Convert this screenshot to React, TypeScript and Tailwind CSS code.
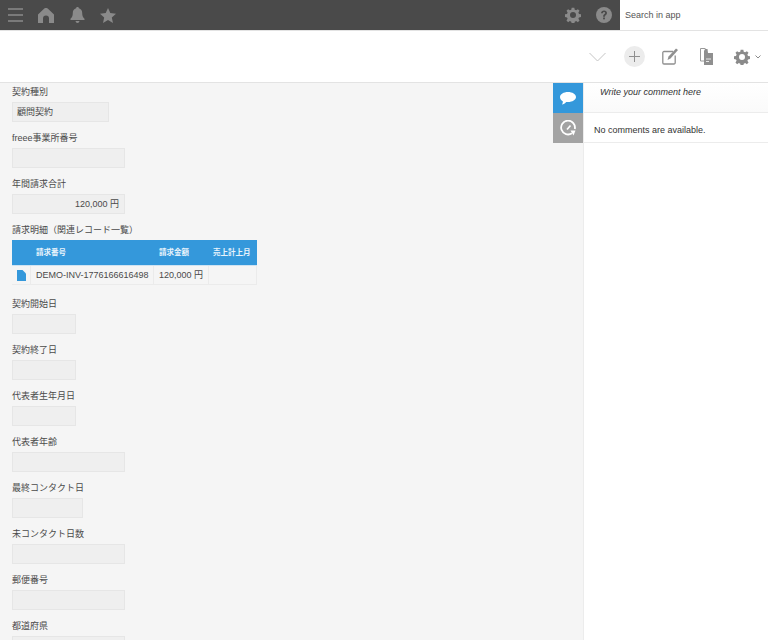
// App.tsx
import React from 'react';

interface Field {
    label: string;
    width: string;
    value?: string;
    right?: boolean;
}

const Gear = ({ size, color }: { size: number; color: string }) => (
    <svg width={size} height={size} viewBox="0 0 24 24" fill={color}>
        <path fillRule="evenodd" d="M10 1h4l.6 3 2.200.9 2.500-1.700 2.500 2.500-1.700 2.500.9 2.200 3 .6v4l-3 .6-.9 2.200 1.700 2.500-2.500 2.500-2.500-1.700-2.200.9-.6 3h-4l-.6-3-2.200-.9-2.500 1.700-2.500-2.500 1.700-2.500-.9-2.200-3-.6v-4l3-.6.9-2.200-1.700-2.500 2.500-2.500 2.500 1.700 2.200-.9.6-3zm2 6.500a4.500 4.500 0 1 0 0 9 4.500 4.500 0 0 0 0-9z" />
    </svg>
);

const fieldsTop: Field[] = [
    { label: '契約種別', width: 'w-[97px]', value: '顧問契約' },
    { label: 'freee事業所番号', width: 'w-[113px]' },
    { label: '年間請求合計', width: 'w-[113px]', value: '120,000 円', right: true },
];

const fieldsBottom: Field[] = [
    { label: '契約開始日', width: 'w-[64px]' },
    { label: '契約終了日', width: 'w-[64px]' },
    { label: '代表者生年月日', width: 'w-[64px]' },
    { label: '代表者年齢', width: 'w-[113px]' },
    { label: '最終コンタクト日', width: 'w-[71px]' },
    { label: '未コンタクト日数', width: 'w-[113px]' },
    { label: '郵便番号', width: 'w-[113px]' },
    { label: '都道府県', width: 'w-[113px]' },
];

const FieldRow = ({ field }: { field: Field }) => (
    <div className="h-[46px] shrink-0">
        <div className="h-[19px] text-[9px] leading-[19px] text-[#4a4a4a]">{field.label}</div>
        <div
            className={`${field.width} h-[20px] bg-[#efefef] border border-[#e6e6e6] text-[9px] leading-[18px] text-[#4a4a4a] ${
                field.right ? 'text-right pr-[5px]' : 'pl-[4px]'
            }`}
        >
            {field.value}
        </div>
    </div>
);

export default function App() {
    return (
        <div
            className="w-[768px] h-[640px] overflow-hidden flex flex-col bg-white"
            style={{ fontFamily: '"Liberation Sans", "Noto Sans CJK JP", sans-serif' }}
        >
            {/* barra superior */}
            <div className="h-[31px] shrink-0 flex bg-[#4a4a4a] border-b border-[#e3e3e3]">
                <div className="flex-1 flex items-center">
                    <svg width="15" height="14" viewBox="0 0 15 14" className="ml-[8px]" stroke="#8a8a8a" strokeWidth="1.300">
                        <path d="M0 1h15M0 7h15M0 13h15" />
                    </svg>
                    <svg width="16" height="15" viewBox="0 0 16 15" className="ml-[15px]" fill="#8a8a8a">
                        <path d="M8 0c1 0 1.800.6 2.500 1.200L16 6.500V15h-5V10.500a3 3 0 0 0-6 0V15H0V6.500l5.500-5.300C6.200.6 7 0 8 0z" />
                    </svg>
                    <svg width="15" height="16" viewBox="0 0 15 16" className="ml-[16px]" fill="#8a8a8a">
                        <path d="M7.500 0c.8 0 1.300.5 1.400 1.200 2.200.6 3.300 2.400 3.300 4.800 0 3 .8 4.400 2.300 5.700V13H.5v-1.300C2 10.400 2.800 9 2.800 6c0-2.400 1.100-4.200 3.300-4.800C6.200.5 6.700 0 7.500 0zM5.500 14h4c-.2 1.200-1 2-2 2s-1.800-.8-2-2z" />
                    </svg>
                    <svg width="16" height="15" viewBox="0 0 16 15" className="ml-[15px]" fill="#8a8a8a">
                        <path d="M8 0l2.300 5.100 5.700.6-4.200 3.700L13 15 8 12.100 3 15l1.200-5.600L0 5.700l5.700-.6z" />
                    </svg>
                </div>
                <div className="flex items-center">
                    <Gear size={16} color="#8a8a8a" />
                    <svg width="16" height="16" viewBox="0 0 16 16" className="ml-[15px] mr-[8px]">
                        <circle cx="8" cy="8" r="8" fill="#8a8a8a" />
                        <path d="M5 6.200C5.100 4.400 6.500 3.500 8 3.500c1.800 0 3 1 3 2.500 0 2.100-2.100 2-2.100 3.700H7.100c0-2.500 2-2.500 2-3.600 0-.6-.5-1-1.100-1-.7 0-1.100.4-1.200 1.100z" fill="#4a4a4a" />
                        <rect x="7.100" y="10.500" width="1.800" height="1.800" fill="#4a4a4a" />
                    </svg>
                </div>
                <div className="w-[148px] bg-white flex items-center pl-[5px] pt-[1px] text-[9px] text-[#555]">
                    Search in app
                </div>
            </div>

            {/* barra de ações */}
            <div className="h-[52px] shrink-0 flex items-center justify-end border-b border-[#e3e3e3] bg-white">
                <svg width="17" height="10" viewBox="0 0 17 10" fill="none" stroke="#c4c4c4" strokeWidth="1">
                    <path d="M.5 1l8 8 8-8" />
                </svg>
                <div className="ml-[18px] w-[21px] h-[21px] rounded-full bg-[#ececec] flex items-center justify-center">
                    <svg width="11" height="11" viewBox="0 0 11 11" stroke="#8f8f8f" strokeWidth="1">
                        <path d="M5.500 0v11M0 5.500h11" />
                    </svg>
                </div>
                <svg width="16" height="17" viewBox="0 0 16 17" className="ml-[17px]" fill="none">
                    <path d="M11 3.500H2a1.200 1.200 0 0 0-1.200 1.200v10.100A1.200 1.200 0 0 0 2 16h10a1.200 1.200 0 0 0 1.200-1.200V7.500" stroke="#8f8f8f" strokeWidth="1.300" />
                    <path d="M14 .5L16 2 8.500 10.500 5.500 12 6.500 8.500z" fill="#8f8f8f" />
                </svg>
                <svg width="13" height="17" viewBox="0 0 13 17" className="ml-[22px]" fill="none">
                    <path d="M5.500 .5H.5V13H4" stroke="#9a9a9a" />
                    <path d="M5 1h2.500l.5 4h5v12H4V3z" fill="#8f8f8f" />
                    <path d="M6 11h5M6 13.500h3" stroke="#fff" strokeWidth="0.800" />
                </svg>
                <div className="ml-[21px] flex">
                    <Gear size={16} color="#8a8a8a" />
                </div>
                <svg width="6" height="4" viewBox="0 0 6 4" className="ml-[5px] mr-[7px]" fill="none" stroke="#8a8a8a">
                    <path d="M.5.500L3 3 5.500.500" />
                </svg>
            </div>

            <div className="flex-1 min-h-0 flex">
                {/* coluna do formulário */}
                <div className="w-[553px] shrink-0 bg-[#f5f5f5] pl-[12px] flex flex-col overflow-hidden">
                    {fieldsTop.map(f => (
                        <FieldRow key={f.label} field={f} />
                    ))}
                    <div className="h-[74px] shrink-0">
                        <div className="h-[19px] text-[9px] leading-[19px] text-[#4a4a4a]">請求明細（関連レコード一覧）</div>
                        <div className="w-[245px]">
                            <div className="h-[26px] bg-[#3498db] border-b border-[#cfe3f2] flex items-center text-[7.500px] font-bold text-[#e8f3fb]">
                                <div className="w-[24px]" />
                                <div className="w-[123px]">請求番号</div>
                                <div className="w-[54px]">請求金額</div>
                                <div className="whitespace-nowrap">売上計上月</div>
                            </div>
                            <div className="h-[19px] flex text-[9px] leading-[18px] text-[#4a4a4a] border-b border-[#ebebeb]">
                                <div className="w-[19px] flex items-center justify-center border-r border-[#ebebeb]">
                                    <svg width="9" height="11" viewBox="0 0 9 11" fill="#3498db">
                                        <path d="M0 0h5.500L9 3.500V11H0z" />
                                    </svg>
                                </div>
                                <div className="w-[123px] pl-[5px] border-r border-[#ebebeb] whitespace-nowrap">DEMO-INV-1776166616498</div>
                                <div className="w-[55px] pl-[5px] border-r border-[#ebebeb] whitespace-nowrap">120,000 円</div>
                                <div className="w-[48px] border-r border-[#ebebeb]" />
                            </div>
                        </div>
                    </div>
                    {fieldsBottom.map(f => (
                        <FieldRow key={f.label} field={f} />
                    ))}
                </div>

                {/* abas */}
                <div className="w-[30px] shrink-0 bg-[#f5f5f5] flex flex-col">
                    <div className="h-[30px] bg-[#3498db] flex items-center justify-center">
                        <svg width="16" height="13" viewBox="0 0 16 13" fill="#fff">
                            <path d="M8 0c4.400 0 8 2.200 8 5s-3.600 5-8 5c-.6 0-1.200 0-1.800-.1C5 11.200 3.500 12.300 1.900 12.600c.6-.8 1-1.900 1-3.200C1.100 8.500 0 6.800 0 5c0-2.800 3.600-5 8-5z" />
                        </svg>
                    </div>
                    <div className="h-[30px] bg-[#a3a3a3] flex items-center justify-center">
                        <svg width="16" height="16" viewBox="0 0 16 16" fill="none" stroke="#fff" strokeWidth="1.800">
                            <path d="M12 13.200A6.900 6.900 0 1 1 14.800 9" />
                            <path d="M7 9.500L10.500 5.500" strokeWidth="1.600" />
                            <path d="M10.500 10.500h5l-2 5z" fill="#fff" stroke="none" />
                        </svg>
                    </div>
                </div>

                {/* comentários */}
                <div className="flex-1 bg-white border-l border-[#ececec] flex flex-col">
                    <div className="h-[30px] shrink-0 pl-[16px] pt-[3px] text-[9px] leading-[13px] italic text-[#333] bg-gradient-to-b from-white to-[#fafafa] border-b border-[#ececec]">
                        Write your comment here
                    </div>
                    <div className="h-[30px] shrink-0 pl-[10px] pt-[7px] flex items-center text-[9px] text-[#333] border-b border-[#ececec]">
                        No comments are available.
                    </div>
                </div>
            </div>
        </div>
    );
}
